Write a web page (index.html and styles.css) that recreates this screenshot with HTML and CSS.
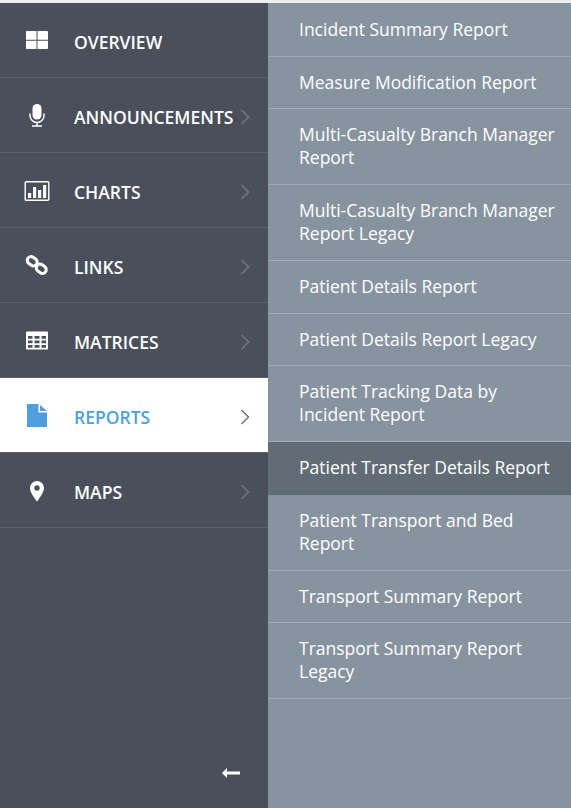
FILE: index.html
```html
<!DOCTYPE html>
<html lang="en">
<head>
  <meta charset="UTF-8">
  <title>Reports menu</title>
  <link rel="stylesheet" href="styles.css">
</head>
<body>
  <div class="layout">
    <nav class="sidebar">
      <a class="nav-item">
        <svg class="nav-icon" viewBox="0 0 26 24"><path d="M3 3h9.500v8.700H2V4a1 1 0 0 1 1-1zM13.500 3H23a1 1 0 0 1 1 1v7.700H13.500zM2 12.800h10.500V21H3a1 1 0 0 1-1-1zM13.500 12.800H24V20a1 1 0 0 1-1 1h-9.500z" fill="#fff"/></svg>
        <span class="nav-label">OVERVIEW</span>
      </a>
      <a class="nav-item">
        <svg class="nav-icon" viewBox="0 0 26 24"><rect x="8.500" y="1" width="9" height="15.500" rx="4.500" fill="#fff"/><path d="M6 10.500v2a7 7 0 0 0 14 0v-2" fill="none" stroke="#fff" stroke-width="1.500"/><path d="M13 19.500v3M8 23h10" stroke="#fff" stroke-width="1.500"/></svg>
        <span class="nav-label">ANNOUNCEMENTS</span>
        <svg class="chevron" viewBox="0 0 10 16"><path d="M1.500 1l7 7-7 7" fill="none" stroke="#6e7884" stroke-width="1.500"/></svg>
      </a>
      <a class="nav-item">
        <svg class="nav-icon" viewBox="0 0 26 24"><rect x="1.200" y="3.700" width="23.600" height="18.600" rx="1" fill="none" stroke="#fff" stroke-width="1.400"/><path d="M4 15h3.200v5H4zM9 9h3.200v11H9zM14 12h3.200v8H14zM19 7h3.200v13H19z" fill="#fff"/></svg>
        <span class="nav-label">CHARTS</span>
        <svg class="chevron" viewBox="0 0 10 16"><path d="M1.500 1l7 7-7 7" fill="none" stroke="#6e7884" stroke-width="1.500"/></svg>
      </a>
      <a class="nav-item">
        <svg class="nav-icon" viewBox="0 0 26 24"><g fill="none" stroke="#fff" stroke-width="3"><rect x="3" y="4.500" width="10.500" height="7.500" rx="3.700" transform="rotate(35 8.250 8.250)"/><rect x="12" y="12" width="10.500" height="7.500" rx="3.700" transform="rotate(35 17.250 15.750)"/></g></svg>
        <span class="nav-label">LINKS</span>
        <svg class="chevron" viewBox="0 0 10 16"><path d="M1.500 1l7 7-7 7" fill="none" stroke="#6e7884" stroke-width="1.500"/></svg>
      </a>
      <a class="nav-item">
        <svg class="nav-icon" viewBox="0 0 26 24"><path fill-rule="evenodd" d="M3 3.500h20a1 1 0 0 1 1 1v16a1 1 0 0 1-1 1H3a1 1 0 0 1-1-1v-16a1 1 0 0 1 1-1zM4 8v2.800h4.500V8zM10.500 8v2.800h5V8zM17.500 8v2.800H22V8zM4 12.500v2.800h4.500v-2.800zM10.500 12.500v2.800h5v-2.800zM17.500 12.500v2.800H22v-2.800zM4 17v2.800h4.500V17zM10.500 17v2.800h5V17zM17.500 17v2.800H22V17z" fill="#fff"/></svg>
        <span class="nav-label">MATRICES</span>
        <svg class="chevron" viewBox="0 0 10 16"><path d="M1.500 1l7 7-7 7" fill="none" stroke="#6e7884" stroke-width="1.500"/></svg>
      </a>
      <a class="nav-item active">
        <svg class="nav-icon" viewBox="0 0 26 24"><path d="M3 1h11.500v8.500H23V24H3z" fill="#4f9fdf"/><path d="M16 2l7 6h-7z" fill="#4f9fdf"/></svg>
        <span class="nav-label">REPORTS</span>
        <svg class="chevron" viewBox="0 0 10 16"><path d="M1.500 1l7 7-7 7" fill="none" stroke="#6e7884" stroke-width="1.500"/></svg>
      </a>
      <a class="nav-item">
        <svg class="nav-icon" viewBox="0 0 26 24"><path fill-rule="evenodd" d="M13 3a7 7 0 0 1 7 7c0 4-4 9.500-7 13.500C10 19.500 6 14 6 10a7 7 0 0 1 7-7zm0 4.300a2.700 2.700 0 1 0 0 5.400 2.700 2.700 0 0 0 0-5.400z" fill="#fff"/></svg>
        <span class="nav-label">MAPS</span>
        <svg class="chevron" viewBox="0 0 10 16"><path d="M1.500 1l7 7-7 7" fill="none" stroke="#6e7884" stroke-width="1.500"/></svg>
      </a>
      <div class="collapse">
        <svg viewBox="0 0 18 10" width="18" height="10"><path d="M5 0v3.500h13v3H5V10L0 5z" fill="#fff"/></svg>
      </div>
    </nav>
    <ul class="submenu">
      <li class="sub-item">Incident Summary Report</li>
      <li class="sub-item">Measure Modification Report</li>
      <li class="sub-item">Multi-Casualty Branch Manager Report</li>
      <li class="sub-item">Multi-Casualty Branch Manager Report Legacy</li>
      <li class="sub-item">Patient Details Report</li>
      <li class="sub-item">Patient Details Report Legacy</li>
      <li class="sub-item">Patient Tracking Data by Incident Report</li>
      <li class="sub-item hover">Patient Transfer Details Report</li>
      <li class="sub-item">Patient Transport and Bed Report</li>
      <li class="sub-item">Transport Summary Report</li>
      <li class="sub-item">Transport Summary Report Legacy</li>
    </ul>
  </div>
</body>
</html>
```

FILE: styles.css
```css
html, body {
  height: 100%;
}
body {
  margin: 0;
  padding-top: 3px;
  box-sizing: border-box;
  background: #eeeeee;
  font-family: "Open Sans", sans-serif;
  overflow: hidden;
}
.layout {
  display: flex;
  height: 805px;
}
.sidebar {
  width: 268px;
  flex: none;
  display: flex;
  flex-direction: column;
  background: #4a505b;
}
.nav-item {
  display: flex;
  align-items: center;
  height: 74px;
  border-bottom: 1px solid #5a616c;
  color: #fff;
  font-size: 17.5px;
  font-weight: 600;
}
.nav-item.active {
  background: #fff;
  color: #4f9fdf;
}
.nav-icon {
  width: 26px;
  height: 24px;
  margin-left: 24px;
  flex: none;
}
.nav-label {
  margin: 4px 0 0 24px;
  flex: 1;
  white-space: nowrap;
}
.chevron {
  width: 10px;
  height: 16px;
  margin: 3px 18px 0 0;
  flex: none;
}
.collapse {
  margin-top: auto;
  padding: 0 28px 30px 0;
  display: flex;
  justify-content: flex-end;
}
.submenu {
  flex: 1;
  margin: 0;
  padding: 1px 0 0;
  list-style: none;
  background: #87939f;
}
.sub-item {
  padding: 14px 10px 14.25px 31px;
  border-bottom: 1px solid #a0aab5;
  color: #fff;
  font-size: 17.5px;
  line-height: 23.33px;
}
.sub-item.hover {
  background: #616c77;
  border-bottom-color: #616c77;
}
```
